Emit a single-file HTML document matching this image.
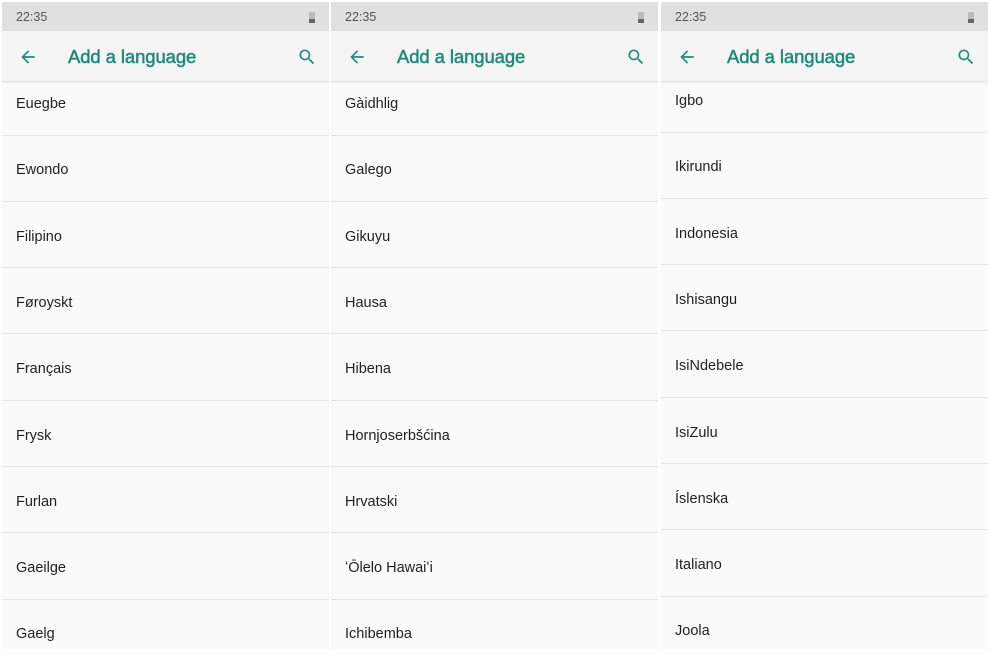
<!DOCTYPE html>
<html><head><meta charset="utf-8"><style>
*{margin:0;padding:0;box-sizing:border-box}
body{width:990px;height:660px;background:#fff;position:relative;overflow:hidden;font-family:"Liberation Sans",Roboto,sans-serif}
.p{position:absolute;top:2px;width:327px;height:647px;background:#fafafa;overflow:hidden}
.sb{position:absolute;left:0;top:0;width:100%;height:29px;background:#e0e0e0}
.sb .t{position:absolute;left:14px;top:8px;font-size:12.5px;color:#555}
.bat{position:absolute;right:14px;top:10px;width:6px;height:11px;background:#bbb;border-radius:1px}
.bat:after{content:"";position:absolute;left:0;bottom:0;width:6px;height:4px;background:#666}
.tb{position:absolute;left:0;top:29px;width:100%;height:51px;background:#f5f5f5;border-bottom:1px solid #e2e2e2;box-shadow:0 1px 2px rgba(0,0,0,.05)}
.tb .ti{position:absolute;left:66px;top:15px;font-size:18.5px;color:#1e8a78;-webkit-text-stroke:0.5px #1e8a78;letter-spacing:-0.1px}
.tb svg{position:absolute}
.it{position:absolute;left:0;width:100%;font-size:14.5px;color:#222;padding-left:14px;line-height:18px}
.sep{position:absolute;left:0;width:100%;height:1px;background:#e3e3e3}
</style></head><body>
<script>
const data=[[2,["Euegbe","Ewondo","Filipino","Føroyskt","Français","Frysk","Furlan","Gaeilge","Gaelg"],0],
[331,["Gàidhlig","Galego","Gikuyu","Hausa","Hibena","Hornjoserbšćina","Hrvatski","ʻŌlelo Hawaiʻi","Ichibemba"],0],
[661,["Igbo","Ikirundi","Indonesia","Ishisangu","IsiNdebele","IsiZulu","Íslenska","Italiano","Joola"],-3]];
let h="";
for(const [x,items,off] of data){
h+=`<div class="p" style="left:${x}px"><div class="sb"><span class="t">22:35</span><div class="bat"></div></div>
<div class="tb"><svg style="left:16px;top:16px" width="20" height="20" viewBox="0 0 24 24"><path d="M20 11H7.8l5.6-5.6L12 4l-8 8 8 8 1.4-1.4L7.8 13H20z" fill="#1e8a78"/></svg><span class="ti">Add a language</span>
<svg style="right:12px;top:16px" width="20" height="20" viewBox="0 0 24 24"><path d="M15.5 14h-.8l-.3-.3A6.5 6.5 0 1 0 9.5 16a6.5 6.5 0 0 0 4.2-1.6l.3.3v.8l5 5 1.5-1.5-5-5zm-6 0a4.5 4.5 0 1 1 0-9 4.5 4.5 0 0 1 0 9z" fill="#1e8a78"/></svg></div>`;
items.forEach((n,i)=>{const c=100+i*66.3+off;h+=`<div class="it" style="top:${c-7}px">${n}</div>`;if(i<8)h+=`<div class="sep" style="top:${c+32.5}px"></div>`;});
h+=`<div class="sep" style="top:${100+8*66.3+off+32.5}px"></div></div>`;}
document.write(h);
</script>
</body></html>
